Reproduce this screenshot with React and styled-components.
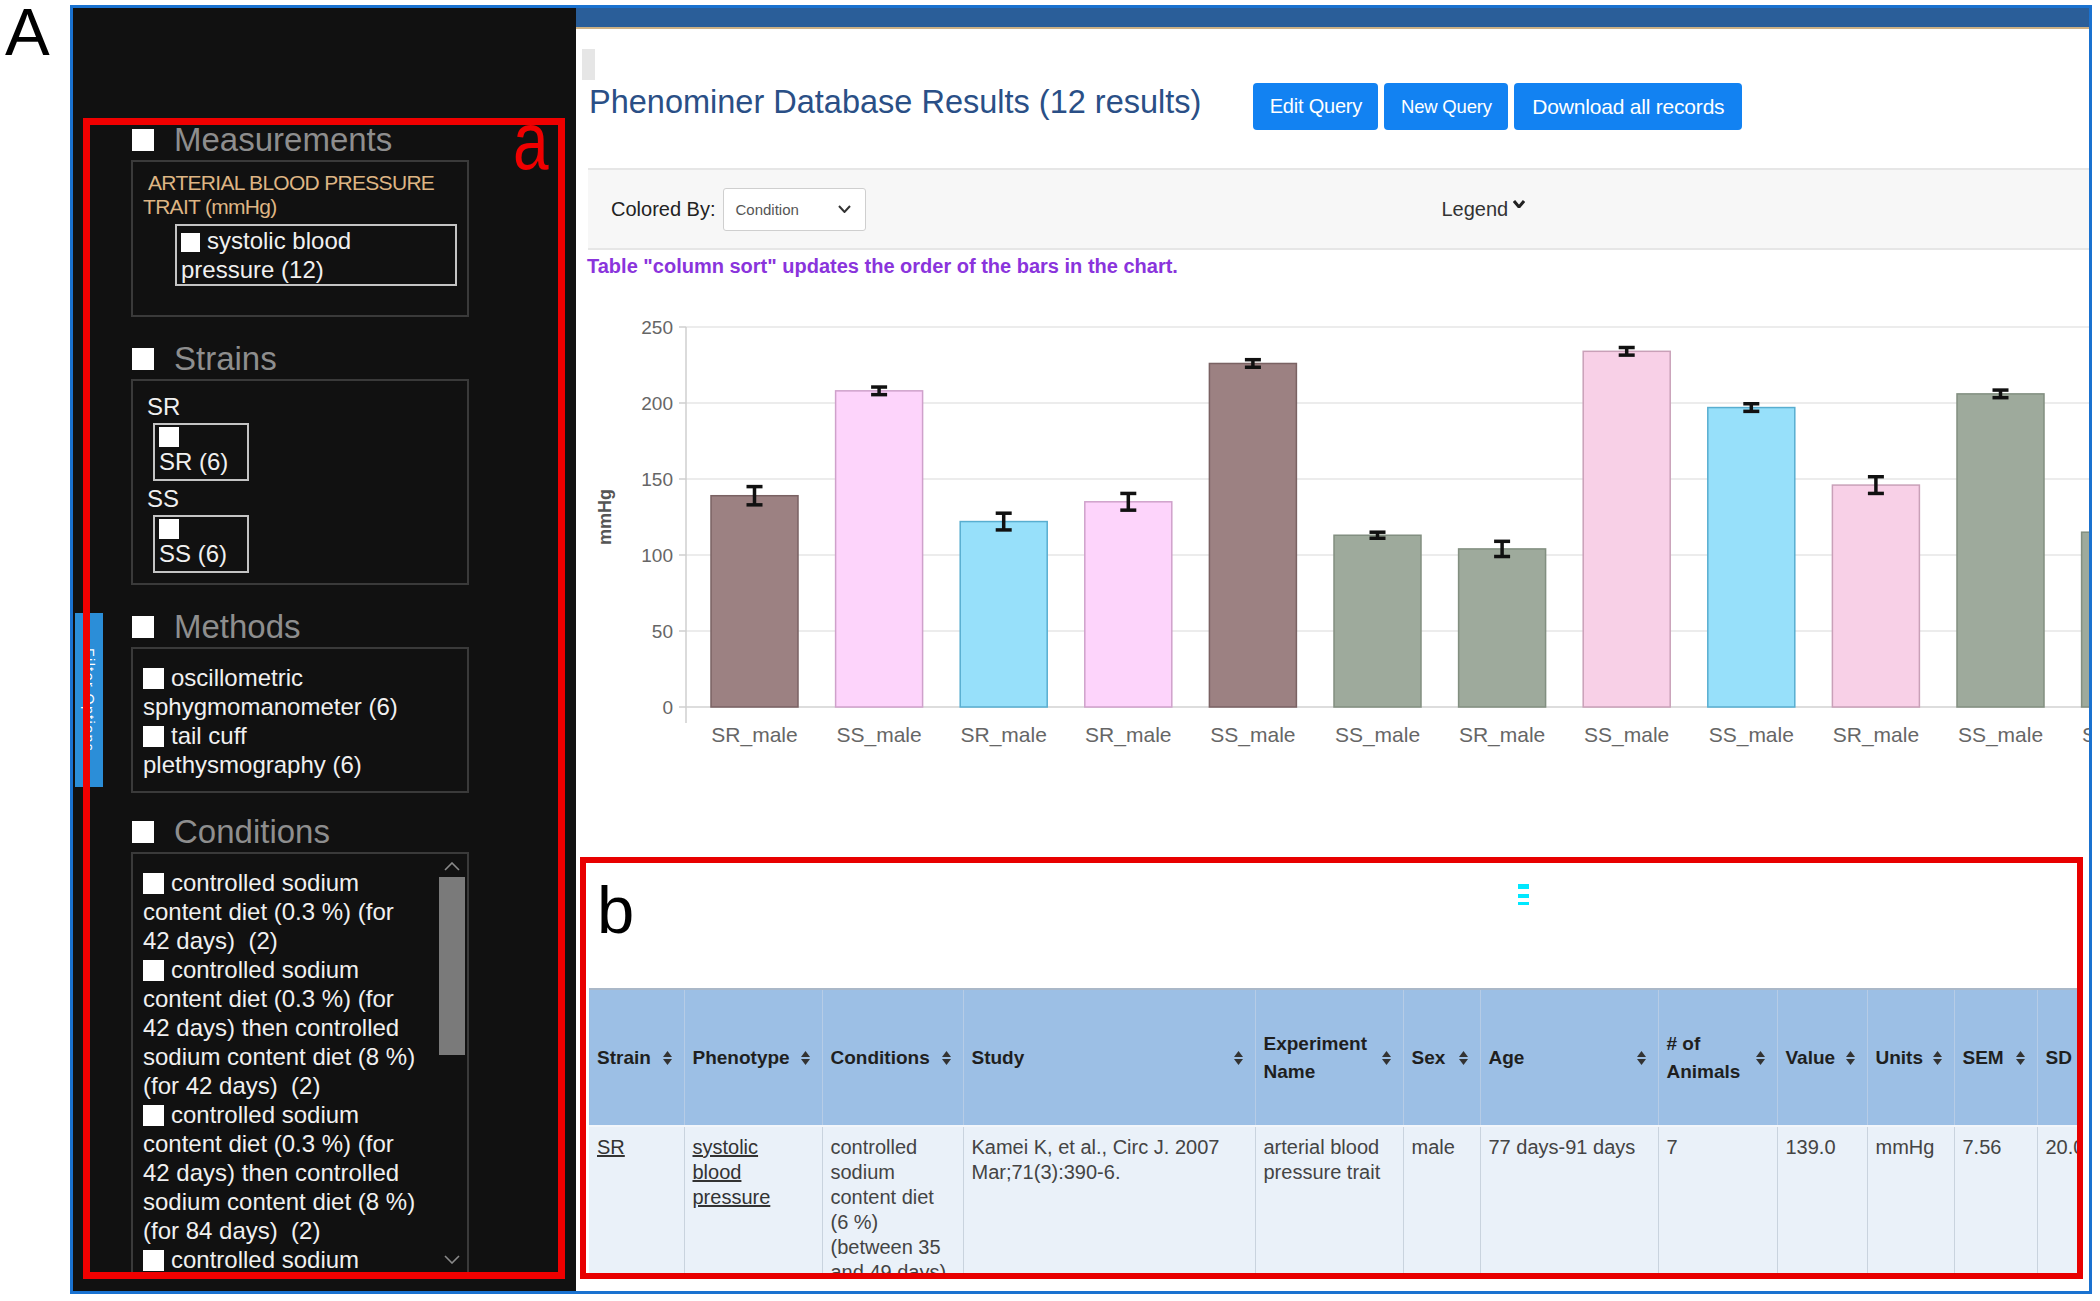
import React from 'react';
import styled, { createGlobalStyle } from 'styled-components';

const GlobalStyle = createGlobalStyle`
  html, body { margin: 0; padding: 0; background: #fff; }
  body { font-family: "Liberation Sans", Arial, sans-serif; }
  * { box-sizing: border-box; }
`;

// ---------- data ----------
const conditions = [
  ['controlled sodium', 'content diet (0.3 %) (for', '42 days)  (2)'],
  ['controlled sodium', 'content diet (0.3 %) (for', '42 days) then controlled', 'sodium content diet (8 %)', '(for 42 days)  (2)'],
  ['controlled sodium', 'content diet (0.3 %) (for', '42 days) then controlled', 'sodium content diet (8 %)', '(for 84 days)  (2)'],
  ['controlled sodium', 'content diet (0.3 %) (for', '42 days)  (2)'],
];

const methods = [
  ['oscillometric', 'sphygmomanometer (6)'],
  ['tail cuff', 'plethysmography (6)'],
];

const palette = {
  brown: ['#9c8182', '#7a6263'],
  pink: ['#fdd4fb', '#cfa1cb'],
  rose: ['#f8d0e7', '#c9a0b8'],
  blue: ['#97e0fa', '#58aed0'],
  sage: ['#9eaa9c', '#828f80'],
};

const bars = [
  { label: 'SR_male', v: 139, e: 6, c: 'brown' },
  { label: 'SS_male', v: 208, e: 2.5, c: 'pink' },
  { label: 'SR_male', v: 122, e: 5.5, c: 'blue' },
  { label: 'SR_male', v: 135, e: 5.5, c: 'pink' },
  { label: 'SS_male', v: 226, e: 2.5, c: 'brown' },
  { label: 'SS_male', v: 113, e: 2, c: 'sage' },
  { label: 'SR_male', v: 104, e: 5, c: 'sage' },
  { label: 'SS_male', v: 234, e: 2.5, c: 'rose' },
  { label: 'SS_male', v: 197, e: 2.5, c: 'blue' },
  { label: 'SR_male', v: 146, e: 5.5, c: 'rose' },
  { label: 'SS_male', v: 206, e: 2.5, c: 'sage' },
  { label: 'SR_male', v: 115, e: 2, c: 'sage' },
];

const columns = [
  { h: 'Strain', w: 95 },
  { h: 'Phenotype', w: 138 },
  { h: 'Conditions', w: 141 },
  { h: 'Study', w: 292 },
  { h: 'Experiment Name', w: 148 },
  { h: 'Sex', w: 77 },
  { h: 'Age', w: 178 },
  { h: '# of Animals', w: 119 },
  { h: 'Value', w: 90 },
  { h: 'Units', w: 87 },
  { h: 'SEM', w: 83 },
  { h: 'SD', w: 90 },
];

const row = [
  { lines: ['SR'], link: true },
  { lines: ['systolic', 'blood', 'pressure'], link: true },
  { lines: ['controlled', 'sodium', 'content diet', '(6 %)', '(between 35', 'and 49 days)'] },
  { lines: ['Kamei K, et al., Circ J. 2007', 'Mar;71(3):390-6.'] },
  { lines: ['arterial blood', 'pressure trait'] },
  { lines: ['male'] },
  { lines: ['77 days-91 days'] },
  { lines: ['7'] },
  { lines: ['139.0'] },
  { lines: ['mmHg'] },
  { lines: ['7.56'] },
  { lines: ['20.0'] },
];

// ---------- page frame ----------
const Page = styled.div`
  width: 2100px;
  height: 1301px;
  display: flex;
  align-items: flex-start;
  background: #fff;
  overflow: hidden;
`;

const FigLetter = styled.div`
  width: 70px;
  flex: none;
  padding-left: 5px;
  margin-top: 4px;
  font-size: 67px;
  line-height: 0.85;
  color: #000;
`;

const Frame = styled.div`
  margin-top: 5px;
  width: 2022px;
  height: 1289px;
  flex: none;
  border: 3px solid #1a72d0;
  display: flex;
  overflow: hidden;
`;

// ---------- sidebar ----------
const Sidebar = styled.aside`
  width: 503px;
  flex: none;
  background: #111;
  padding: 110px 11px 12px 10px;
  position: relative;
`;

const SideTab = styled.div`
  position: absolute;
  left: 2px;
  top: 605px;
  width: 28px;
  height: 174px;
  background: #2b8ed8;
  color: #fff;
  font-size: 14px;
  writing-mode: vertical-rl;
  display: flex;
  align-items: center;
  justify-content: center;
  letter-spacing: 1.5px;
`;

const RedFrame = styled.div`
  position: relative;
  height: 1161px;
  border: 7px solid #f00000;
`;

const RedClip = styled.div`
  height: 100%;
  padding-left: 41px;
  overflow: hidden;
`;

const PanelTag = styled.div`
  position: absolute;
  right: 9px;
  top: -14px;
  font-size: 82px;
  line-height: 60px;
  color: #f00000;
  transform: scaleX(0.78);
  transform-origin: right top;
`;

const Section = styled.section`
  margin-bottom: ${p => p.$mb ?? 27}px;
`;

const SectionHead = styled.div`
  display: flex;
  align-items: center;
  height: 30px;
  gap: 20px;
`;

const HeadBox = styled.span`
  width: 22px;
  height: 22px;
  margin-left: 1px;
  background: #fff;
`;

const HeadText = styled.span`
  font-size: 33px;
  line-height: 30px;
  color: #8e8e8e;
`;

const FilterBox = styled.div`
  width: 338px;
  margin-top: 5px;
  border: 2px solid #3a3a3a;
  padding: ${p => p.$pad};
  height: ${p => p.$h || 'auto'};
  color: #f0f0f0;
  font-size: 24px;
  line-height: 29px;
`;

const TraitLabel = styled.div`
  font-size: 21px;
  line-height: 24px;
  letter-spacing: -0.7px;
  color: #deb584;
  text-indent: 5px;
`;

const OptionBox = styled.div`
  margin: ${p => p.$m};
  width: ${p => p.$w}px;
  border: 2px solid #c4c4c4;
  padding: ${p => p.$pad};
`;

const Tick = styled.span`
  display: ${p => (p.$block ? 'block' : 'inline-block')};
  width: ${p => p.$s || 21}px;
  height: ${p => p.$s || 21}px;
  background: #fff;
  vertical-align: -3px;
  margin-right: 7px;
`;

const Line = styled.div`
  white-space: pre;
  margin-top: ${p => p.$mt || 0}px;
`;

const ScrollArea = styled.div`
  display: flex;
  height: 100%;
`;

const ScrollList = styled.div`
  flex: 1;
  padding: 14px 0 0 10px;
  overflow: hidden;
`;

const ScrollTrack = styled.div`
  width: 30px;
  flex: none;
  display: flex;
  flex-direction: column;
  align-items: center;
  padding: 8px 0;
`;

const ScrollThumb = styled.div`
  width: 26px;
  height: 178px;
  margin: 6px 0 auto;
  background: #7a7a7a;
`;

const Chevron = ({ up, color = '#8a8a8a', w = 16, h = 9, sw = 1.6 }) => (
  <svg width={w} height={h} viewBox={`0 0 ${w} ${h}`} style={{ flex: 'none' }}>
    <polyline
      points={up ? `1,${h - 1} ${w / 2},1 ${w - 1},${h - 1}` : `1,1 ${w / 2},${h - 1} ${w - 1},1`}
      fill="none"
      stroke={color}
      strokeWidth={sw}
    />
  </svg>
);

const FilterItem = ({ lines }) => (
  <div>
    {lines.map((l, i) => (
      <Line key={i}>{i === 0 && <Tick />}{l}</Line>
    ))}
  </div>
);

// ---------- main ----------
const Main = styled.main`
  flex: 1;
  min-width: 0;
  display: flex;
  flex-direction: column;
  overflow: hidden;
  background: #fff;
`;

const TopBand = styled.div`
  height: 21px;
  flex: none;
  background: #2a5e99;
  border-bottom: 2px solid #cdb184;
`;

const GrayTab = styled.div`
  width: 13px;
  height: 31px;
  margin: 20px 0 0 6px;
  background: #e6e6e6;
`;

const TitleRow = styled.div`
  display: flex;
  align-items: flex-start;
  margin-top: 3px;
  padding-left: 13px;
  height: 47px;
`;

const Title = styled.h1`
  margin: 1px 52px 0 0;
  font-size: 32.5px;
  line-height: 37px;
  font-weight: normal;
  color: #2a4f86;
  white-space: nowrap;
`;

const Buttons = styled.div`
  display: flex;
  gap: 6px;
`;

const Button = styled.button`
  width: ${p => p.$w}px;
  height: 47px;
  border: none;
  border-radius: 4px;
  background: #1282f2;
  color: #fff;
  font-family: inherit;
  font-size: ${p => p.$fs}px;
  letter-spacing: -0.2px;
  padding: 0;
`;

const Toolbar = styled.div`
  margin: 38px 0 0 12px;
  height: 82px;
  background: #f7f7f7;
  border-top: 2px solid #e6e6e6;
  border-bottom: 2px solid #e6e6e6;
  display: flex;
  align-items: center;
  padding-left: 23px;
`;

const ToolLabel = styled.span`
  font-size: 20px;
  color: #222;
  margin-right: 7px;
`;

const Select = styled.div`
  width: 143px;
  height: 43px;
  background: #fff;
  border: 1px solid #cfcfcf;
  border-radius: 3px;
  display: flex;
  align-items: center;
  justify-content: space-between;
  padding: 0 14px 0 12px;
  font-size: 15px;
  color: #555;
`;

const Legend = styled.div`
  margin-left: 576px;
  display: flex;
  align-items: flex-start;
  gap: 5px;
  font-size: 20px;
  line-height: 24px;
  color: #333;
  & svg { margin-top: 3px; }
`;

const Note = styled.div`
  margin-top: 5px;
  padding-left: 11px;
  font-size: 20px;
  line-height: 22px;
  font-weight: bold;
  color: #8a34dc;
  white-space: nowrap;
`;

const ChartWrap = styled.div`
  margin: 13px 0 0 13px;
  height: 470px;
`;

const TableFrame = styled.div`
  margin: 97px 0 0 4px;
  width: 1503px;
  height: 422px;
  flex: none;
  border: 6px solid #e80000;
  overflow: hidden;
`;

const TableTop = styled.div`
  height: 125px;
  display: flex;
  align-items: flex-start;
`;

const BLetter = styled.div`
  margin: 13px 0 0 11px;
  font-size: 67px;
  line-height: 1;
  color: #000;
`;

const CyanMark = styled.svg`
  margin: 21px 0 0 884px;
`;

const Table = styled.table`
  margin-left: 3px;
  border-collapse: collapse;
  table-layout: fixed;
  width: 1538px;
`;

const Th = styled.th`
  height: 137px;
  padding: 0 12px 0 8px;
  background: #9cbfe5;
  border-top: 2px solid #aab8c8;
  border-bottom: 2px solid #f2f6fb;
  border-left: 1px solid #b6cce6;
  text-align: left;
  vertical-align: middle;
  font-size: 19px;
  line-height: 28px;
  font-weight: bold;
  color: #1f1f1f;
  &:first-child { border-left: none; }
`;

const ThInner = styled.div`
  display: flex;
  align-items: center;
  justify-content: space-between;
  gap: 6px;
`;

const Td = styled.td`
  padding: 8px 8px 0 8px;
  height: 160px;
  background: #eaf1f9;
  border-left: 1px solid #c9d3de;
  vertical-align: top;
  font-size: 20px;
  line-height: 25px;
  color: #444;
  white-space: nowrap;
  &:first-child { border-left: none; }
`;

const CellLink = styled.span`
  text-decoration: underline;
  color: #333;
`;

const SortIcon = () => (
  <svg width="9" height="16" viewBox="0 0 9 16" style={{ flex: 'none' }}>
    <polygon points="0,7 4.5,1 9,7" fill="#333" />
    <polygon points="0,9 4.5,15 9,9" fill="#333" />
  </svg>
);

const BarChart = () => {
  const y = v => 417 - 1.52 * v;
  const ticks = [0, 50, 100, 150, 200, 250];
  return (
    <svg width="1520" height="470" viewBox="0 0 1520 470" fontFamily='"Liberation Sans", Arial, sans-serif'>
      {ticks.map(t => (
        <g key={t}>
          <line x1="97" x2="1520" y1={y(t)} y2={y(t)} stroke={t === 0 ? '#d2d2d2' : '#e6e6e6'} strokeWidth="1.5" />
          <line x1="90" x2="97" y1={y(t)} y2={y(t)} stroke="#cfcfcf" strokeWidth="1.5" />
          <text x="84" y={y(t) + 7} textAnchor="end" fontSize="19" fill="#666">{t}</text>
        </g>
      ))}
      <line x1="97" x2="97" y1="37" y2="433" stroke="#cfcfcf" strokeWidth="1.5" />
      <text x="22" y="227" transform="rotate(-90 22 227)" textAnchor="middle" fontSize="18" fontWeight="bold" fill="#555">mmHg</text>
      {bars.map((b, i) => {
        const x = 122 + 124.6 * i;
        const cx = x + 43.5;
        const [fill, stroke] = palette[b.c];
        return (
          <g key={i}>
            <rect x={x} y={y(b.v)} width="87" height={417 - y(b.v)} fill={fill} stroke={stroke} strokeWidth="1.5" />
            <line x1={cx} x2={cx} y1={y(b.v + b.e)} y2={y(b.v - b.e)} stroke="#111" strokeWidth="3.5" />
            <line x1={cx - 8} x2={cx + 8} y1={y(b.v + b.e)} y2={y(b.v + b.e)} stroke="#111" strokeWidth="3.5" />
            <line x1={cx - 8} x2={cx + 8} y1={y(b.v - b.e)} y2={y(b.v - b.e)} stroke="#111" strokeWidth="3.5" />
            <text x={cx} y="452" textAnchor="middle" fontSize="21" fill="#666">{b.label}</text>
          </g>
        );
      })}
    </svg>
  );
};

export default function App() {
  return (
    <Page>
      <GlobalStyle />
      <FigLetter>A</FigLetter>
      <Frame>
        <Sidebar>
          <SideTab>Filter Options</SideTab>
          <RedFrame>
            <PanelTag>a</PanelTag>
            <RedClip>
              <Section>
                <SectionHead><HeadBox /><HeadText>Measurements</HeadText></SectionHead>
                <FilterBox $pad="9px 10px 29px 10px">
                  <TraitLabel>ARTERIAL BLOOD PRESSURE<br />TRAIT (mmHg)</TraitLabel>
                  <OptionBox $m="5px 0 0 32px" $w={282} $pad="0 4px">
                    <Line><Tick $s={19} />systolic blood</Line>
                    <Line>pressure (12)</Line>
                  </OptionBox>
                </FilterBox>
              </Section>

              <Section>
                <SectionHead><HeadBox /><HeadText>Strains</HeadText></SectionHead>
                <FilterBox $pad="11px 10px 10px 14px">
                  <Line>SR</Line>
                  <OptionBox $m="2px 0 0 6px" $w={96} $pad="2px 4px 3px 4px">
                    <Tick $block $s={20} />
                    <Line>SR (6)</Line>
                  </OptionBox>
                  <Line $mt={3}>SS</Line>
                  <OptionBox $m="2px 0 0 6px" $w={96} $pad="2px 4px 3px 4px">
                    <Tick $block $s={20} />
                    <Line>SS (6)</Line>
                  </OptionBox>
                </FilterBox>
              </Section>

              <Section $mb={24}>
                <SectionHead><HeadBox /><HeadText>Methods</HeadText></SectionHead>
                <FilterBox $pad="14px 10px 12px 10px">
                  {methods.map((m, i) => <FilterItem key={i} lines={m} />)}
                </FilterBox>
              </Section>

              <Section>
                <SectionHead><HeadBox /><HeadText>Conditions</HeadText></SectionHead>
                <FilterBox $pad="0" $h="422px">
                  <ScrollArea>
                    <ScrollList>
                      {conditions.map((c, i) => <FilterItem key={i} lines={c} />)}
                    </ScrollList>
                    <ScrollTrack>
                      <Chevron up />
                      <ScrollThumb />
                      <Chevron />
                    </ScrollTrack>
                  </ScrollArea>
                </FilterBox>
              </Section>
            </RedClip>
          </RedFrame>
        </Sidebar>

        <Main>
          <TopBand />
          <GrayTab />
          <TitleRow>
            <Title>Phenominer Database Results (12 results)</Title>
            <Buttons>
              <Button $w={125} $fs={20}>Edit Query</Button>
              <Button $w={124} $fs={18.5}>New Query</Button>
              <Button $w={228} $fs={21}>Download all records</Button>
            </Buttons>
          </TitleRow>

          <Toolbar>
            <ToolLabel>Colored By:</ToolLabel>
            <Select>
              <span>Condition</span>
              <Chevron color="#333" w={13} h={8} sw={2} />
            </Select>
            <Legend>
              <span>Legend</span>
              <Chevron color="#222" w={12} h={8} sw={3} />
            </Legend>
          </Toolbar>

          <Note>Table "column sort" updates the order of the bars in the chart.</Note>

          <ChartWrap>
            <BarChart />
          </ChartWrap>

          <TableFrame>
            <TableTop>
              <BLetter>b</BLetter>
              <CyanMark width="11" height="22" viewBox="0 0 11 22">
                <rect x="0" y="0" width="11" height="5" fill="#00e8ff" />
                <rect x="0" y="10" width="11" height="4" fill="#00e8ff" />
                <rect x="0" y="18" width="11" height="3" fill="#00e8ff" />
              </CyanMark>
            </TableTop>
            <Table>
              <colgroup>
                {columns.map(c => <col key={c.h} style={{ width: c.w }} />)}
              </colgroup>
              <thead>
                <tr>
                  {columns.map(c => (
                    <Th key={c.h}>
                      <ThInner><span>{c.h}</span><SortIcon /></ThInner>
                    </Th>
                  ))}
                </tr>
              </thead>
              <tbody>
                <tr>
                  {row.map((cell, i) => (
                    <Td key={i}>
                      {cell.lines.map((l, j) => (
                        <div key={j}>{cell.link ? <CellLink>{l}</CellLink> : l}</div>
                      ))}
                    </Td>
                  ))}
                </tr>
              </tbody>
            </Table>
          </TableFrame>
        </Main>
      </Frame>
    </Page>
  );
}
